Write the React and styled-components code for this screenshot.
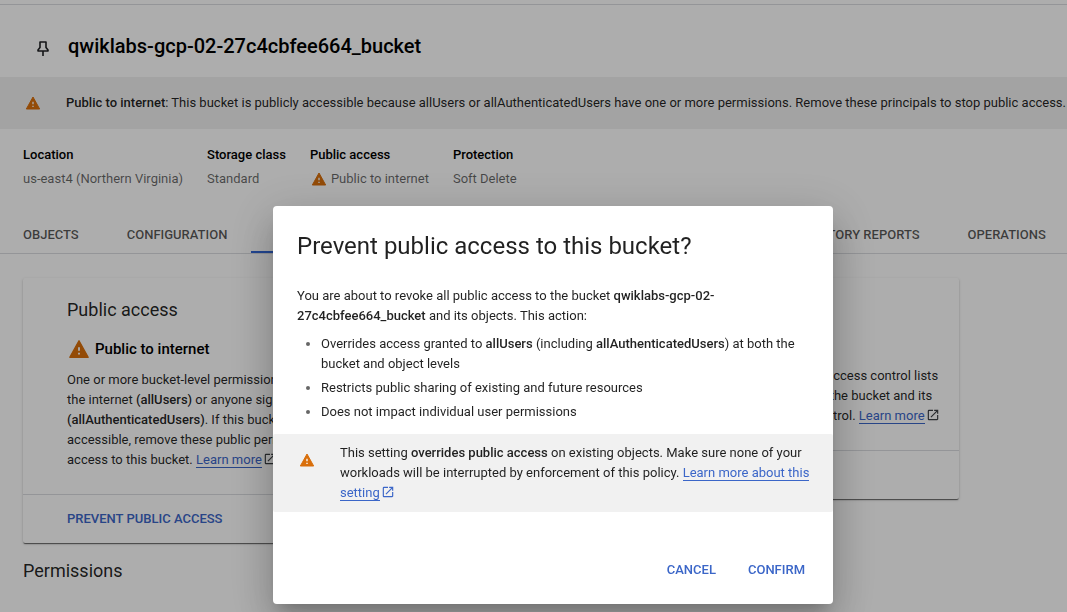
import React from "react";
import styled, { createGlobalStyle } from "styled-components";

const GlobalStyle = createGlobalStyle`
  * { box-sizing: border-box; }
  html, body { margin: 0; background: #fff; }
  body {
    font-family: Roboto, "Liberation Sans", sans-serif;
    font-size: 13px;
    line-height: 20px;
    color: rgba(0, 0, 0, 0.87);
    overflow: hidden;
  }
  h1, h2, h3, p, ul, dl, dd { margin: 0; padding: 0; font-weight: 400; }
  b, strong { font-weight: 500; }
`;

const Page = styled.div`
  border-top: 1px solid #dadce0;
  margin-top: 4px;
`;

const TitleBar = styled.header`
  display: flex;
  align-items: center;
  gap: 16px;
  height: 72px;
  padding: 10px 34px 0;
`;

const PageTitle = styled.h1`
  font-size: 20px;
  line-height: 24px;
  font-weight: 500;
  color: #000;
`;

const PinButton = styled.button`
  display: flex;
  padding: 0;
  border: 0;
  background: none;
  color: #202124;
`;

const Banner = styled.div`
  display: flex;
  align-items: center;
  gap: 25px;
  height: 52px;
  padding-left: 25px;
  background: #f1f1f1;
  white-space: nowrap;
`;

const Facts = styled.dl`
  display: flex;
  gap: 24px;
  padding: 16px 23px 0;
`;

const FactName = styled.dt`
  font-weight: 500;
  color: #000;
  margin-bottom: 4px;
`;

const FactValue = styled.dd`
  display: flex;
  align-items: center;
  gap: 4px;
  color: rgba(0, 0, 0, 0.6);
  svg { margin-left: 1px; }
`;

const Tabs = styled.nav`
  display: flex;
  margin-top: 28px;
  border-bottom: 1px solid #dadce0;
`;

const Tab = styled.a`
  flex: none;
  padding: 8px 24px 6px;
  border-bottom: 2px solid ${(p) => (p.$active ? "#3367d6" : "transparent")};
  color: ${(p) => (p.$active ? "#3367d6" : "rgba(0, 0, 0, 0.66)")};
  font-weight: 500;
  text-decoration: none;
  &:first-child { padding-left: 23px; }
`;

const Cards = styled.div`
  display: grid;
  grid-template-columns: 1fr 1fr;
  align-items: start;
  gap: 24px;
  max-width: 982px;
  padding: 24px 23px 0;
`;

const Card = styled.section`
  border-radius: 2px;
  box-shadow: 0 2px 1px -1px rgba(0, 0, 0, 0.4), 0 1px 1px 0 rgba(0, 0, 0, 0.24),
    0 1px 3px 0 rgba(0, 0, 0, 0.16);
`;

const CardBody = styled.div`
  padding: 20px 16px 24px 44px;
`;

const CardTitle = styled.h2`
  font-size: 18px;
  line-height: 24px;
`;

const CardStatus = styled.h3`
  display: flex;
  align-items: center;
  gap: 4px;
  margin: 15px 0 9px;
  font-size: 15px;
  line-height: 20px;
  font-weight: 500;
  color: #000;
  svg { margin: 1px; }
`;

const CardFooter = styled.div`
  height: 49px;
  padding: 14px 44px;
  border-top: 1px solid #dadce0;
`;

const TextButton = styled.button`
  padding: 0;
  border: 0;
  background: none;
  color: #3b66c8;
  font: inherit;
  font-weight: 500;
`;

const Link = styled.a`
  color: #3b66c8;
  text-decoration: none;
  border-bottom: 1px solid #3b66c8;
`;

const SectionTitle = styled.h2`
  padding: 16px 23px;
  font-size: 18px;
  line-height: 24px;
`;

const Icon = styled.svg`
  flex: none;
  display: block;
`;

const InlineIcon = styled.svg`
  margin-left: 1px;
  vertical-align: -2px;
`;

const Backdrop = styled.div`
  position: fixed;
  inset: 0;
  display: flex;
  align-items: flex-start;
  justify-content: center;
  padding: 206px 0 0 39px;
  background: rgba(0, 0, 0, 0.32);
`;

const Dialog = styled.div`
  width: 560px;
  border-radius: 4px;
  background: #fff;
  box-shadow: 0 11px 15px -7px rgba(0, 0, 0, 0.2), 0 24px 38px 3px rgba(0, 0, 0, 0.14),
    0 9px 46px 8px rgba(0, 0, 0, 0.12);
`;

const DialogTitle = styled.h2`
  padding: 24px 24px 0;
  font-size: 24px;
  line-height: 32px;
`;

const DialogBody = styled.div`
  padding: 24px 24px 12px;
`;

const Effects = styled.ul`
  padding-left: 24px;
  margin-top: 8px;
  li + li { margin-top: 4px; }
  li::marker { color: rgba(0, 0, 0, 0.6); }
`;

const Notice = styled.div`
  display: flex;
  align-items: flex-start;
  gap: 25px;
  padding: 9px 16px 9px 26px;
  border-radius: 2px;
  background: #f1f1f1;
  > svg { margin-top: 9px; }
`;

const Actions = styled.div`
  display: flex;
  justify-content: flex-end;
  gap: 32px;
  padding: 48px 28px 24px;
`;

function Warning({ size }) {
  return (
    <Icon width={size} height={size} viewBox="0 0 24 24" aria-hidden="true">
      <path
        d="M2 21h20L12 3z"
        fill="#d96f0b"
        stroke="#d96f0b"
        strokeWidth="1.5"
        strokeLinejoin="round"
      />
      <path d="M11 10h2v4h-2zM11 16h2v2h-2z" fill="#fff" />
    </Icon>
  );
}

function External({ color = "#3c4043" }) {
  return (
    <InlineIcon width="14" height="14" viewBox="0 0 24 24" fill={color} aria-hidden="true">
      <path d="M19 19H5V5h7V3H5a2 2 0 0 0-2 2v14a2 2 0 0 0 2 2h14c1.1 0 2-.9 2-2v-7h-2v7zM14 3v2h3.59l-9.83 9.83 1.41 1.41L19 6.41V10h2V3h-7z" />
    </InlineIcon>
  );
}

const TABS = [
  "OBJECTS",
  "CONFIGURATION",
  "PERMISSIONS",
  "PROTECTION",
  "LIFECYCLE",
  "OBSERVABILITY",
  "INVENTORY REPORTS",
  "OPERATIONS",
];

const FACTS = [
  { name: "Location", value: "us-east4 (Northern Virginia)" },
  { name: "Storage class", value: "Standard" },
  { name: "Public access", value: "Public to internet", warn: true },
  { name: "Protection", value: "Soft Delete" },
];

export default function App() {
  return (
    <>
      <GlobalStyle />
      <Page>
        <TitleBar>
          <PinButton aria-label="Pin">
            <Icon
              width="18"
              height="20"
              viewBox="0 0 18 20"
              fill="none"
              stroke="currentColor"
              strokeWidth="1.6"
              strokeLinejoin="round"
            >
              <path d="M6 6h6v5.500l2 2.500v1H4v-1l2-2.500zM9 15v5" />
            </Icon>
          </PinButton>
          <PageTitle>qwiklabs-gcp-02-27c4cbfee664_bucket</PageTitle>
        </TitleBar>
        <Banner>
          <Warning size={16} />
          <p>
            <b>Public to internet</b>: This bucket is publicly accessible because allUsers or
            allAuthenticatedUsers have one or more permissions. Remove these principals to stop
            public access.
          </p>
        </Banner>
        <Facts>
          {FACTS.map((f) => (
            <div key={f.name}>
              <FactName>{f.name}</FactName>
              <FactValue>
                {f.warn && <Warning size={16} />}
                {f.value}
              </FactValue>
            </div>
          ))}
        </Facts>
        <Tabs>
          {TABS.map((t) => (
            <Tab key={t} href="#" $active={t === "PERMISSIONS"}>
              {t}
            </Tab>
          ))}
        </Tabs>
        <Cards>
          <Card>
            <CardBody>
              <CardTitle>Public access</CardTitle>
              <CardStatus>
                <Warning size={22} />
                Public to internet
              </CardStatus>
              <p>
                One or more bucket-level permissions grant access to everyone on the internet{" "}
                <b>(allUsers)</b> or anyone signed in to a Google account{" "}
                <b>(allAuthenticatedUsers)</b>. If this bucket should not be publicly accessible,
                remove these public permissions or prevent public access to this bucket.{" "}
                <Link href="#">Learn more</Link>
                <External />
              </p>
            </CardBody>
            <CardFooter>
              <TextButton>PREVENT PUBLIC ACCESS</TextButton>
            </CardFooter>
          </Card>
          <Card>
            <CardBody>
              <CardTitle>Access control</CardTitle>
              <CardStatus>Fine-grained</CardStatus>
              <p>
                This bucket lets you manage access with object access control lists (ACLs) along
                with the permissions given on both the bucket and its objects for enhanced
                fine-grained object level control. <Link href="#">Learn more</Link>
                <External />
              </p>
            </CardBody>
            <CardFooter />
          </Card>
        </Cards>
        <SectionTitle>Permissions</SectionTitle>
      </Page>
      <Backdrop>
        <Dialog role="dialog" aria-modal="true" aria-labelledby="dialog-title">
          <DialogTitle id="dialog-title">Prevent public access to this bucket?</DialogTitle>
          <DialogBody>
            <p>
              You are about to revoke all public access to the bucket{" "}
              <b>qwiklabs-gcp-02-27c4cbfee664_bucket</b> and its objects. This action:
            </p>
            <Effects>
              <li>
                Overrides access granted to <b>allUsers</b> (including{" "}
                <b>allAuthenticatedUsers</b>) at both the bucket and object levels
              </li>
              <li>Restricts public sharing of existing and future resources</li>
              <li>Does not impact individual user permissions</li>
            </Effects>
          </DialogBody>
          <Notice>
            <Warning size={16} />
            <p>
              This setting <b>overrides public access</b> on existing objects. Make sure none of
              your workloads will be interrupted by enforcement of this policy.{" "}
              <Link href="#">Learn more about this setting</Link>
              <External color="#3b66c8" />
            </p>
          </Notice>
          <Actions>
            <TextButton>CANCEL</TextButton>
            <TextButton>CONFIRM</TextButton>
          </Actions>
        </Dialog>
      </Backdrop>
    </>
  );
}
